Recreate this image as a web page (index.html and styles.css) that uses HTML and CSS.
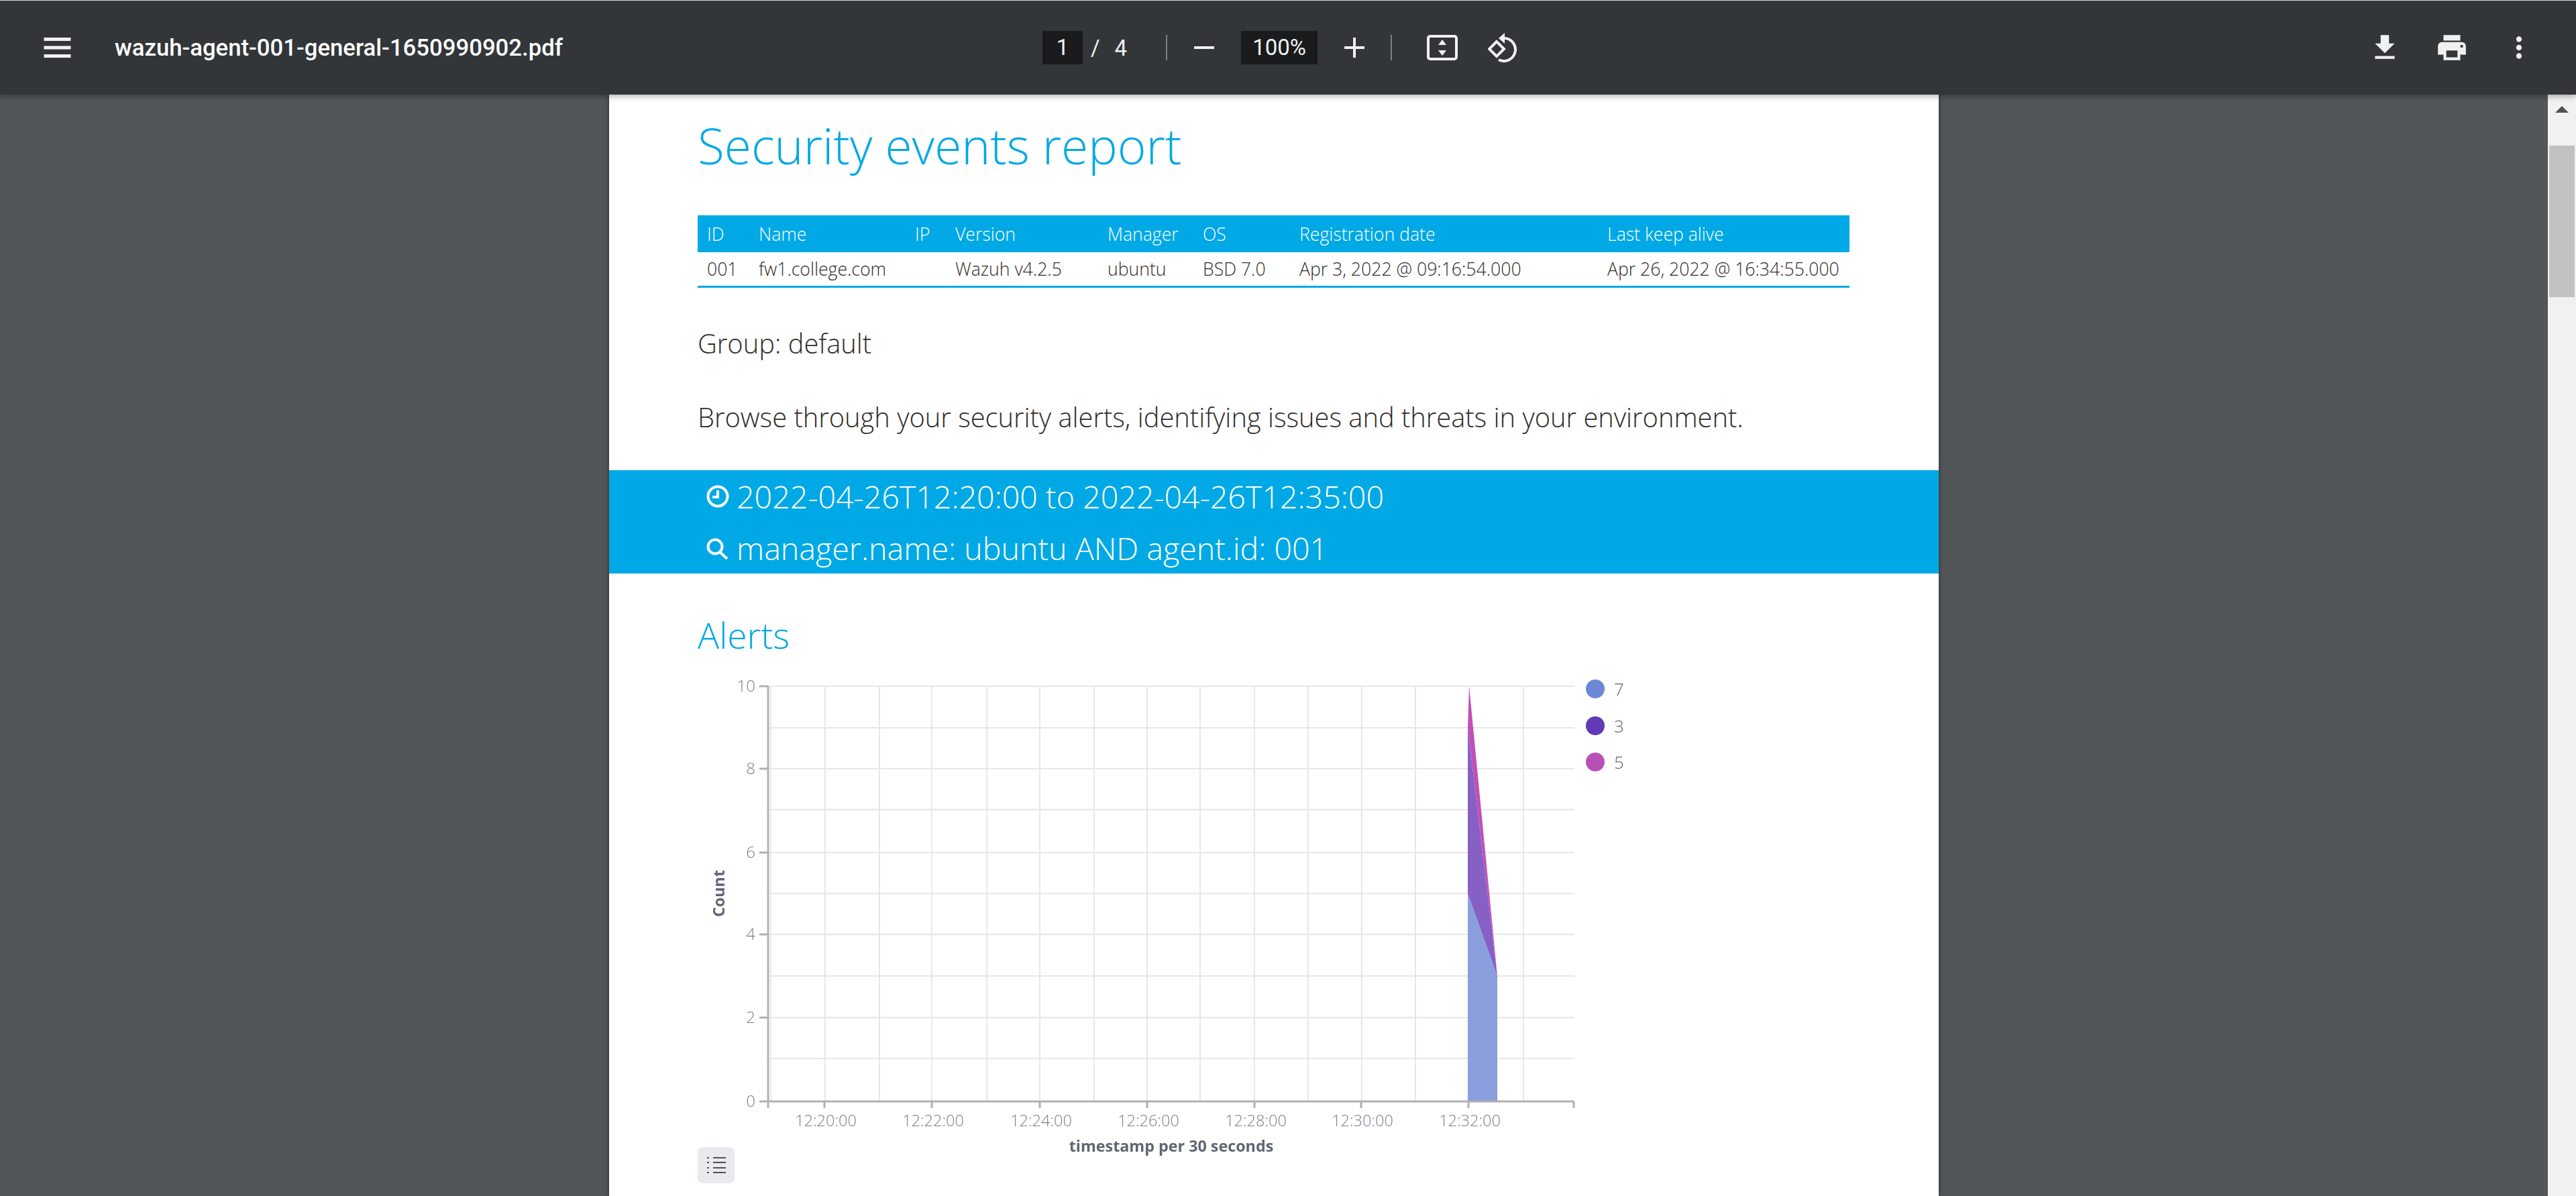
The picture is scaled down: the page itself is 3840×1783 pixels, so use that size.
FILE: index.html
```html
<!DOCTYPE html>
<html lang="en">
<head>
    <meta charset="UTF-8">
    <title>wazuh-agent-001-general-1650990902.pdf</title>
    <link rel="stylesheet" href="styles.css">
</head>
<body>
    <div class="toolbar">
        <div class="toolbarLeft">
            <svg class="menuIcon" viewBox="0 0 40 30"><path d="M0 0h40v5H0zM0 12.500h40v5H0zM0 25h40v5H0z"/></svg>
            <span class="fileName">wazuh-agent-001-general-1650990902.pdf</span>
        </div>
        <div class="toolbarCenter">
            <span class="pageBox">1</span>
            <span class="pageSlash">/</span>
            <span class="pageTotal">4</span>
            <span class="separator sepFirst"></span>
            <svg class="zoomIcon" viewBox="0 0 30 30"><path d="M0 13h30v4H0z"/></svg>
            <span class="zoomBox">100%</span>
            <svg class="zoomIcon" viewBox="0 0 30 30"><path d="M0 13h13V0h4v13h13v4H17v13h-4V17H0z"/></svg>
            <span class="separator sepSecond"></span>
            <svg class="fitIcon" viewBox="0 0 46 38"><rect x="2" y="2" width="42" height="34" rx="3"/><path class="solid" d="M23 7l6 8H17zM23 31l-6-8h12z"/></svg>
            <svg class="rotateIcon" viewBox="0 0 44 44"><path d="M13 13L2 24l11 11 11-11z"/><path d="M25 8A17 17 0 1 1 16 40"/><path class="solid" d="M25 0v16l-9-8z"/></svg>
        </div>
        <div class="toolbarRight">
            <svg class="actionIcon" viewBox="0 0 24 24"><path d="M19 9h-4V3H9v6H5l7 7 7-7zM5 18v2h14v-2H5z"/></svg>
            <svg class="actionIcon" viewBox="0 0 24 24"><path d="M19 8H5c-1.660 0-3 1.340-3 3v6h4v4h12v-4h4v-6c0-1.660-1.340-3-3-3zm-3 11H8v-5h8v5zm3-7c-.55 0-1-.45-1-1s.45-1 1-1 1 .45 1 1-.45 1-1 1zm-1-9H6v4h12V3z"/></svg>
            <svg class="actionIcon" viewBox="0 0 24 24"><path d="M12 8c1.100 0 2-.9 2-2s-.9-2-2-2-2 .9-2 2 .9 2 2 2zm0 2c-1.100 0-2 .9-2 2s.9 2 2 2 2-.9 2-2-.9-2-2-2zm0 6c-1.100 0-2 .9-2 2s.9 2 2 2 2-.9 2-2-.9-2-2-2z"/></svg>
        </div>
    </div>

    <div class="viewer">
        <div class="pageArea">
            <div class="paper">
                <h1 class="reportTitle">Security events report</h1>

                <table class="agentTable">
                    <colgroup>
                        <col class="colId"><col class="colName"><col class="colIp"><col class="colVersion">
                        <col class="colManager"><col class="colOs"><col class="colReg"><col class="colLast">
                    </colgroup>
                    <thead>
                        <tr>
                            <th>ID</th><th>Name</th><th>IP</th><th>Version</th>
                            <th>Manager</th><th>OS</th><th>Registration date</th><th>Last keep alive</th>
                        </tr>
                    </thead>
                    <tbody>
                        <tr>
                            <td>001</td><td>fw1.college.com</td><td></td><td>Wazuh v4.2.5</td>
                            <td>ubuntu</td><td>BSD 7.0</td><td>Apr 3, 2022 @ 09:16:54.000</td><td>Apr 26, 2022 @ 16:34:55.000</td>
                        </tr>
                    </tbody>
                </table>

                <p class="groupLine">Group: default</p>
                <p class="introLine">Browse through your security alerts, identifying issues and threats in your environment.</p>

                <div class="filterBand">
                    <div class="filterRow">
                        <svg class="filterIcon" viewBox="0 0 34 34"><circle cx="17" cy="17" r="14.500"/><path d="M17 8v10H9"/></svg>
                        <span>2022-04-26T12:20:00 to 2022-04-26T12:35:00</span>
                    </div>
                    <div class="filterRow">
                        <svg class="filterIcon" viewBox="0 0 34 34"><circle cx="13" cy="15" r="10.500"/><path d="M20 23l11 10"/></svg>
                        <span>manager.name: ubuntu AND agent.id: 001</span>
                    </div>
                </div>

                <h2 class="sectionTitle">Alerts</h2>

                <!-- chart coords are page px minus (1040, 1000) -->
                <svg class="alertsChart" viewBox="0 0 1400 710" width="1400" height="710">
                    <g class="gridLines">
                        <path d="M105 23H1307M105 85H1307M105 146H1307M105 207H1307M105 271H1307M105 332H1307M105 393H1307M105 455H1307M105 517H1307M105 578H1307"/>
                        <path d="M109 23V642M190 23V642M271 23V642M349 23V642M431 23V642M510 23V642M591 23V642M670 23V642M749 23V642M830 23V642M910 23V642M990 23V642M1070 23V642M1231 23V642"/>
                    </g>
                    <polygon class="areaBlue" points="1148,642 1148,332 1192,455 1192,642"/>
                    <polygon class="areaPurple" points="1148,332 1148,85 1192,455"/>
                    <polygon class="areaMagenta" points="1148,85 1150,23 1192,455"/>
                    <g class="axisLines">
                        <path d="M105 23V652M92 23H105M92 146H105M92 271H105M92 393H105M92 517H105M92 642H105"/>
                        <path d="M105 642H1306M189 642V652M349 642V652M510 642V652M670 642V652M830 642V652M989 642V652M1149 642V652M1306 642V652"/>
                    </g>
                    <g class="yLabels">
                        <text x="86" y="31">10</text>
                        <text x="86" y="154">8</text>
                        <text x="86" y="279">6</text>
                        <text x="86" y="401">4</text>
                        <text x="86" y="525">2</text>
                        <text x="86" y="650">0</text>
                    </g>
                    <g class="xLabels">
                        <text x="191" y="679">12:20:00</text>
                        <text x="351" y="679">12:22:00</text>
                        <text x="512" y="679">12:24:00</text>
                        <text x="672" y="679">12:26:00</text>
                        <text x="832" y="679">12:28:00</text>
                        <text x="991" y="679">12:30:00</text>
                        <text x="1151" y="679">12:32:00</text>
                    </g>
                    <text class="axisName" transform="translate(40 332) rotate(-90)">Count</text>
                    <text class="axisName" x="706" y="717">timestamp per 30 seconds</text>
                    <circle class="dotBlue" cx="1338" cy="27" r="14"/>
                    <circle class="dotPurple" cx="1338" cy="82" r="14"/>
                    <circle class="dotMagenta" cx="1338" cy="136" r="14"/>
                    <text class="legendLabel" x="1366" y="37">7</text>
                    <text class="legendLabel" x="1366" y="92">3</text>
                    <text class="legendLabel" x="1366" y="146">5</text>
                </svg>

                <button type="button" class="listButton">
                    <svg viewBox="0 0 28 24"><path d="M0 0h3v2H0zM0 7h3v2H0zM0 15h3v2H0zM0 22h3v2H0zM9 0h19v2H9zM9 7h19v2H9zM9 15h19v2H9zM9 22h19v2H9z"/></svg>
                </button>
            </div>
        </div>
        <div class="scrollbar">
            <div class="scrollArrow"></div>
            <div class="scrollThumb"></div>
        </div>
    </div>
</body>
</html>
```
FILE: styles.css
```css
html, body {
    margin: 0;
    height: 100%;
    overflow: hidden;
}
body {
    display: flex;
    flex-direction: column;
    background-color: #525659;
    font-family: "Open Sans", sans-serif;
    border-top: 1px solid #d8dadb;
    box-sizing: border-box;
}

/* toolbar */
.toolbar {
    position: relative;
    z-index: 2;
    height: 140px;
    flex: none;
    display: grid;
    grid-template-columns: 1fr auto 1fr;
    align-items: center;
    background-color: #323639;
    box-shadow: 0 3px 8px rgba(0, 0, 0, 0.3);
    color: #f1f1f1;
    font-family: Roboto, sans-serif;
}
.toolbarLeft {
    display: flex;
    align-items: center;
    padding-left: 65px;
}
.menuIcon {
    width: 41px;
    height: 30px;
    fill: #f1f1f1;
    margin-right: 65px;
}
.fileName {
    font-size: 34.700px;
    font-weight: 500;
    color: #fff;
}
.toolbarCenter {
    display: flex;
    align-items: center;
    padding-right: 24px;
    font-size: 33px;
}
.pageBox, .zoomBox {
    height: 50px;
    line-height: 50px;
    text-align: center;
    background-color: #191b1c;
}
.pageBox {
    width: 60px;
}
.pageSlash {
    margin-left: 12px;
}
.pageTotal {
    margin-left: 22px;
}
.separator {
    width: 2px;
    height: 38px;
    background-color: #7e8082;
}
.sepFirst {
    margin-left: 58px;
    margin-right: 40px;
}
.sepSecond {
    margin-left: 39px;
    margin-right: 52px;
}
.zoomIcon {
    width: 30px;
    height: 30px;
    fill: #f1f1f1;
}
.zoomBox {
    width: 114px;
    margin-left: 40px;
    margin-right: 40px;
}
.fitIcon, .rotateIcon {
    fill: none;
    stroke: #f1f1f1;
    stroke-width: 4;
}
.fitIcon .solid, .rotateIcon .solid {
    fill: #f1f1f1;
    stroke: none;
}
.fitIcon {
    width: 46px;
    height: 38px;
}
.rotateIcon {
    width: 44px;
    height: 44px;
    margin-left: 45px;
}
.toolbarRight {
    display: flex;
    align-items: center;
    justify-content: flex-end;
    gap: 50px;
    padding-right: 60px;
}
.actionIcon {
    width: 50px;
    height: 50px;
    fill: #f1f1f1;
}

/* page */
.viewer {
    flex: 1;
    display: flex;
    min-height: 0;
}
.pageArea {
    flex: 1;
    display: flex;
    justify-content: center;
    overflow: hidden;
}
.paper {
    width: 1982px;
    flex: none;
    box-sizing: border-box;
    padding: 0 133px 0 132px;
    background-color: #fff;
    box-shadow: 0 0 6px rgba(0, 0, 0, 0.5);
    color: #2f2c2a;
    font-weight: 300;
}
.reportTitle {
    margin: 28px 0 0;
    font-size: 73px;
    line-height: 96px;
    font-weight: 300;
    color: #00a9e5;
}
.agentTable {
    width: 100%;
    margin-top: 56px;
    border-collapse: collapse;
    table-layout: fixed;
    font-size: 26.600px;
}
.colId { width: 77px; }
.colName { width: 233px; }
.colIp { width: 60px; }
.colVersion { width: 227px; }
.colManager { width: 142px; }
.colOs { width: 144px; }
.colReg { width: 459px; }
.agentTable th, .agentTable td {
    padding: 0 0 0 14px;
    text-align: left;
    font-weight: 300;
    white-space: nowrap;
}
.agentTable th {
    height: 55px;
    background-color: #00a9e5;
    color: #fff;
}
.agentTable td {
    height: 50px;
    border-bottom: 3px solid #00a9e5;
}
.groupLine, .introLine {
    margin: 0;
    font-size: 39.850px;
    line-height: 52px;
}
.groupLine {
    margin-top: 57px;
}
.introLine {
    margin-top: 58px;
}
.filterBand {
    margin: 53px -133px 0 -132px;
    height: 154px;
    background-color: #00a9e5;
    color: #fff;
    font-size: 46.600px;
}
.filterRow {
    display: flex;
    align-items: center;
    height: 77px;
    padding-left: 145px;
    gap: 11px;
}
.filterIcon {
    width: 34px;
    height: 34px;
    fill: none;
    stroke: #fff;
    stroke-width: 4;
}
.sectionTitle {
    margin: 56px 0 0;
    font-size: 53.500px;
    line-height: 72px;
    font-weight: 300;
    color: #00a9e5;
}
.alertsChart {
    display: block;
    margin-top: 17px;
    filter: blur(0.7px);
    overflow: visible;
}
.gridLines path {
    fill: none;
    stroke: #e6e7eb;
    stroke-width: 2;
}
.axisLines path {
    fill: none;
    stroke: #b0b1b5;
    stroke-width: 3;
}
.yLabels text {
    text-anchor: end;
    font-size: 24px;
    fill: #7a7f8b;
}
.xLabels text {
    text-anchor: middle;
    font-size: 23.500px;
    fill: #7a7f8b;
}
.axisName {
    text-anchor: middle;
    font-size: 23.300px;
    font-weight: 700;
    fill: #5f6673;
}
.legendLabel {
    font-size: 26px;
    fill: #5f636d;
}
.areaBlue { fill: #8a9edd; }
.areaPurple { fill: #8660c4; }
.areaMagenta { fill: #c050b8; }
.dotBlue { fill: #6d87d8; }
.dotPurple { fill: #623ab5; }
.dotMagenta { fill: #b950b8; }
.listButton {
    display: block;
    width: 55px;
    height: 54px;
    padding: 0;
    border: none;
    border-radius: 7px;
    background-color: #e9eaed;
}
.listButton svg {
    display: block;
    width: 28px;
    height: 24px;
    margin: 0 auto;
    fill: #4c5260;
}

/* scrollbar */
.scrollbar {
    width: 42px;
    flex: none;
    position: relative;
    z-index: 1;
    background-color: #f1f1f1;
}
.scrollArrow {
    width: 0;
    height: 0;
    margin: 17px auto 0;
    border-left: 10px solid transparent;
    border-right: 10px solid transparent;
    border-bottom: 10px solid #505050;
}
.scrollThumb {
    height: 226px;
    margin: 49px 2px 0;
    background-color: #c1c1c1;
}
```
